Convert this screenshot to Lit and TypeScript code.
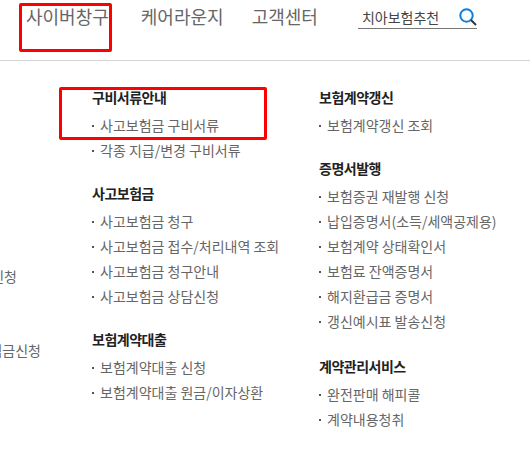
import { LitElement, html, css } from 'lit';
import { customElement } from 'lit/decorators.js';

const LEFT_GROUPS = [
  { title: '구비서류안내', items: ['사고보험금 구비서류', '각종 지급/변경 구비서류'] },
  { title: '사고보험금', items: ['사고보험금 청구', '사고보험금 접수/처리내역 조회', '사고보험금 청구안내', '사고보험금 상담신청'] },
  { title: '보험계약대출', items: ['보험계약대출 신청', '보험계약대출 원금/이자상환'] },
];

const RIGHT_GROUPS = [
  { title: '보험계약갱신', items: ['보험계약갱신 조회'] },
  { title: '증명서발행', items: ['보험증권 재발행 신청', '납입증명서(소득/세액공제용)', '보험계약 상태확인서', '보험료 잔액증명서', '해지환급금 증명서', '갱신예시표 발송신청'] },
  { title: '계약관리서비스', items: ['완전판매 해피콜', '계약내용청취'] },
];

@customElement('app-root')
export class AppRoot extends LitElement {
  static styles = css`
    :host {
      display: block;
      position: relative;
      width: 530px;
      height: 450px;
      overflow: hidden;
      background: #fff;
      font-family: 'Noto Sans CJK KR', 'Noto Sans', sans-serif;
    }
    .header {
      display: flex;
      align-items: flex-start;
      height: 61px;
      box-sizing: border-box;
      padding: 3px 0 0 26px;
      border-bottom: 1px solid #d4d4d4;
    }
    .nav {
      display: flex;
      gap: 28px;
      font-size: 18px;
      line-height: 26px;
      color: #666;
    }
    .nav span:first-child {
      margin-right: 4px;
    }
    .search {
      display: flex;
      justify-content: space-between;
      align-items: center;
      width: 119px;
      height: 23px;
      margin: 3px 0 0 40px;
      padding-left: 4px;
      box-sizing: border-box;
      border-bottom: 1px solid #777;
      font-size: 14px;
      color: #444;
    }
    .search svg {
      display: block;
    }
    .menu {
      display: flex;
      padding-top: 25px;
    }
    .clipped {
      flex: none;
      display: flex;
      flex-direction: column;
      align-items: flex-end;
      width: 41px;
      margin-right: 51px;
      padding-top: 178px;
      overflow: hidden;
      white-space: nowrap;
      font-size: 14px;
      line-height: 25px;
      color: #666;
    }
    .clipped span:first-child {
      margin-right: 24px;
    }
    .clipped span + span {
      margin-top: 49px;
    }
    .column {
      flex: none;
      width: 227px;
    }
    .group {
      margin-bottom: 19px;
    }
    .column.right .group:last-child {
      margin-top: 21px;
    }
    .title {
      font-size: 14px;
      font-weight: 700;
      line-height: 22px;
      letter-spacing: -0.5px;
      color: #222;
      margin-bottom: 5px;
    }
    .item {
      display: flex;
      font-size: 14px;
      line-height: 25px;
      color: #666;
      white-space: nowrap;
    }
    .item::before {
      content: '';
      width: 2px;
      height: 2px;
      margin: 12px 6px 0 0;
      background: #555;
    }
    .mark {
      position: absolute;
      box-sizing: border-box;
      border: 3px solid #f00;
      border-radius: 2px;
    }
    .mark.nav-mark {
      left: 19px;
      top: 3px;
      width: 93px;
      height: 49px;
    }
    .mark.row-mark {
      left: 59px;
      top: 87px;
      width: 208px;
      height: 53px;
    }
  `;

  renderColumn(groups: typeof LEFT_GROUPS, side: string) {
    return html`
      <div class="column ${side}">
        ${groups.map((group) => html`
          <div class="group">
            <div class="title">${group.title}</div>
            ${group.items.map((item) => html`<div class="item">${item}</div>`)}
          </div>
        `)}
      </div>
    `;
  }

  render() {
    return html`
      <div class="header">
        <div class="nav">
          <span>사이버창구</span>
          <span>케어라운지</span>
          <span>고객센터</span>
        </div>
        <div class="search">
          <span>치아보험추천</span>
          <svg width="18" height="18" viewBox="0 0 18 18" fill="none">
            <circle cx="7.5" cy="7.5" r="6.2" stroke="#0b7fdc" stroke-width="2"></circle>
            <path d="M12 12l5 5" stroke="#333" stroke-width="2"></path>
          </svg>
        </div>
      </div>
      <div class="menu">
        <div class="clipped">
          <span>상담신청</span>
          <span>보험금신청</span>
        </div>
        ${this.renderColumn(LEFT_GROUPS, 'left')}
        ${this.renderColumn(RIGHT_GROUPS, 'right')}
      </div>
      <div class="mark nav-mark"></div>
      <div class="mark row-mark"></div>
    `;
  }
}
